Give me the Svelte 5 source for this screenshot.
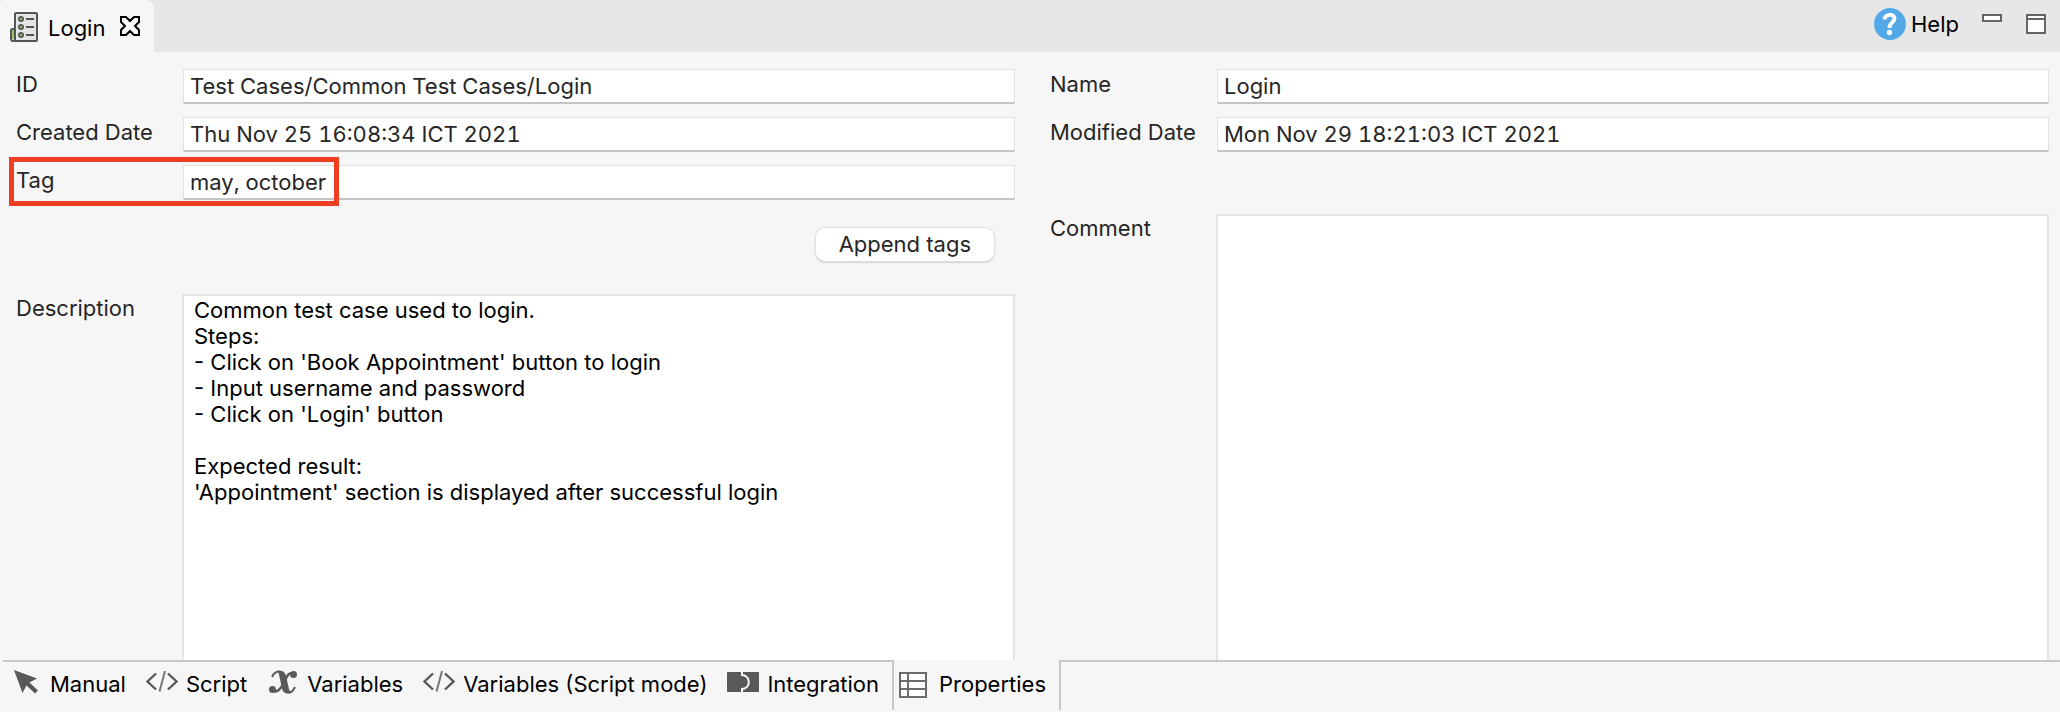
<script>
  let id = $state('Test Cases/Common Test Cases/Login');
  let created = $state('Thu Nov 25 16:08:34 ICT 2021');
  let tag = $state('may, october');
  let name = $state('Login');
  let modified = $state('Mon Nov 29 18:21:03 ICT 2021');
  let comment = $state('');
  let description = $state(
    [
      'Common test case used to login.',
      'Steps:',
      "- Click on 'Book Appointment' button to login",
      '- Input username and password',
      "- Click on 'Login' button",
      '',
      'Expected result:',
      "'Appointment' section is displayed after successful login"
    ].join('\n')
  );

  const tabs = [
    { icon: 'pointer', label: 'Manual' },
    { icon: 'code', label: 'Script' },
    { icon: 'variable', label: 'Variables' },
    { icon: 'code', label: 'Variables (Script mode)' },
    { icon: 'integration', label: 'Integration' },
    { icon: 'table', label: 'Properties' }
  ];
  let selected = $state('Properties');
</script>

<div class="editor">
  <header>
    <div class="file-tab">
      <svg class="case-icon" width="28" height="30" viewBox="0 0 28 30" aria-hidden="true">
        <path d="M5 17H2.500Q1 17 1 18.500V26.500Q1 29 3.500 29H6" fill="#fff" stroke="#555" stroke-width="2" />
        <path d="M3.500 18V27" stroke="#7fc241" stroke-width="2.500" />
        <rect x="5" y="1" width="22" height="28" rx="1" fill="#e4e4e4" stroke="#555" stroke-width="2" />
        <g fill="#7fae55" stroke="#555" stroke-width="1.600">
          <circle cx="11" cy="7" r="2.200" /><circle cx="11" cy="15" r="2.200" /><circle cx="11" cy="23" r="2.200" />
        </g>
        <path d="M16 7h8M16 15h8M16 23h8" stroke="#555" stroke-width="2" />
      </svg>
      <span>Login</span>
      <button class="plain" aria-label="Close">
        <svg width="20" height="20" viewBox="0 0 20 20" aria-hidden="true">
          <path d="M1 1H6L10 5L14 1H19V6L15 10L19 14V19H14L10 15L6 19H1V14L5 10L1 6Z" fill="#fff" stroke="#000" stroke-width="2" />
        </svg>
      </button>
    </div>
    <div class="tools">
      <button class="plain help">
        <svg width="32" height="32" viewBox="0 0 32 32" aria-hidden="true">
          <circle cx="16" cy="16" r="16" fill="#53a8e8" />
          <path d="M10.500 11.500C11 5.500 20.500 5.500 20.500 10.500C20.500 14.500 15.500 14.500 15.500 20" fill="none" stroke="#fff" stroke-width="4" />
          <circle cx="15.500" cy="24.500" r="2.700" fill="#fff" />
        </svg>
        <span>Help</span>
      </button>
      <button class="plain minimize" aria-label="Minimize">
        <svg width="20" height="8" viewBox="0 0 20 8" aria-hidden="true">
          <rect x="1" y="1" width="18" height="6" fill="#fff" stroke="#666" stroke-width="2" />
        </svg>
      </button>
      <button class="plain" aria-label="Maximize">
        <svg width="20" height="20" viewBox="0 0 20 20" aria-hidden="true">
          <rect x="1" y="1" width="18" height="18" fill="#fff" stroke="#666" stroke-width="2" />
          <path d="M1 5H19" stroke="#666" stroke-width="2" />
        </svg>
      </button>
    </div>
  </header>

  <main>
    <div class="column">
      <div class="row"><label for="id">ID</label><input id="id" bind:value={id} /></div>
      <div class="row"><label for="created">Created Date</label><input id="created" bind:value={created} /></div>
      <div class="row">
        <label for="tag">Tag</label><input id="tag" bind:value={tag} />
        <div class="highlight"></div>
      </div>
      <div class="actions"><button class="append">Append tags</button></div>
      <div class="row grow">
        <label for="description">Description</label>
        <textarea id="description" spellcheck="false" bind:value={description}></textarea>
      </div>
    </div>
    <div class="column">
      <div class="row"><label for="name">Name</label><input id="name" bind:value={name} /></div>
      <div class="row"><label for="modified">Modified Date</label><input id="modified" bind:value={modified} /></div>
      <div class="row grow comment">
        <label for="comment">Comment</label>
        <textarea id="comment" bind:value={comment}></textarea>
      </div>
    </div>
  </main>

  <nav>
    {#each tabs as tab}
      <button class="tab" class:selected={selected === tab.label} onclick={() => (selected = tab.label)}>
        <svg width="32" height="32" viewBox="0 0 32 32" fill="none" aria-hidden="true">
          {#if tab.icon === 'pointer'}
            <path d="M4 2L27 10.500L19.500 14.500L28 22.500L25 25.500L16.500 17.500L12.500 25Z" fill="#595959" />
          {:else if tab.icon === 'code'}
            <path d="M10 5.500L1.500 13.500L10 21.500M22 5.500L30.500 13.500L22 21.500" stroke="#595959" stroke-width="2.400" />
            <path d="M19 3L13.500 23.500" stroke="#777" stroke-width="2" />
          {:else if tab.icon === 'variable'}
            <path d="M5 9C7 4.500 9.500 3.500 12 3.500C15.500 3.500 16.500 6 17 9L19 19C19.500 22.500 20.500 24.500 22.500 24.500C25 24.500 26.500 22 28 19" stroke="#595959" stroke-width="2" />
            <path d="M10 3C15 2 18 3.500 19 8L21.500 19C22 22 23 24 25 24.500C20 27 16 25 15 20.500L12.500 9C12 6 11.500 4 10 3Z" fill="#595959" />
            <path d="M26 6C21 3 19 11 16.500 15.500C13.500 21 10 26 5 22" stroke="#595959" stroke-width="2.500" />
            <circle cx="26.500" cy="6.500" r="3.500" fill="#595959" />
            <circle cx="5.500" cy="21.500" r="3.500" fill="#595959" />
          {:else if tab.icon === 'integration'}
            <rect y="4" width="32" height="20" rx="1" fill="#595959" />
            <path d="M15 3V7C24 7.500 24 20.500 15 21V25" stroke="#fff" stroke-width="2" />
          {:else}
            <rect x="1" y="5" width="26" height="24" fill="#fff" stroke="#6b6b6b" stroke-width="2" />
            <path d="M1 13H27M1 21H27M9 5V29" stroke="#6b6b6b" stroke-width="2" />
          {/if}
        </svg>
        <span>{tab.label}</span>
      </button>
    {/each}
    <div class="rest"></div>
  </nav>
</div>

<style>
  :global(body) {
    margin: 0;
    background: #f6f6f6;
  }
  .editor {
    display: flex;
    flex-direction: column;
    height: 100vh;
    background: #f6f6f6;
    color: #000;
    font: 22px/26px Inter, sans-serif;
  }
  button,
  input,
  textarea {
    box-sizing: border-box;
    margin: 0;
    font: inherit;
    color: inherit;
    border-radius: 0;
    outline: none;
  }
  svg {
    display: block;
    flex: none;
  }
  header {
    display: flex;
    justify-content: space-between;
    height: 52px;
    background: #e7e7e7;
  }
  .file-tab {
    display: flex;
    align-items: center;
    gap: 10px;
    padding: 2px 14px 0 10px;
    border-radius: 4px 8px 0 0;
    background: #f6f6f6;
  }
  .file-tab span {
    padding-top: 2px;
  }
  .plain {
    display: flex;
    padding: 0;
    border: 0;
    background: none;
  }
  .file-tab .plain {
    padding: 0 0 2px 5px;
  }
  .tools {
    display: flex;
    align-items: flex-start;
    padding: 8px 14px 0 0;
  }
  .tools .plain {
    padding-top: 6px;
  }
  .tools .help {
    align-items: center;
    gap: 5px;
    margin-right: 23px;
    padding-top: 0;
  }
  .minimize {
    margin-right: 24px;
  }
  main {
    display: grid;
    grid-template-columns: 1fr 1fr;
    gap: 35px;
    flex: 1;
    min-height: 0;
    padding: 17px 11px 0 16px;
    color: #262626;
  }
  .column {
    display: flex;
    flex-direction: column;
    gap: 13px;
    min-width: 0;
  }
  .row {
    position: relative;
    display: grid;
    grid-template-columns: 167px 1fr;
  }
  .row label {
    padding-top: 2px;
  }
  .grow {
    flex: 1;
    grid-template-columns: 166px 1fr;
    min-height: 0;
  }
  .grow label {
    padding-top: 1px;
  }
  input {
    width: 100%;
    height: 35px;
    padding: 0 6px 1px;
    border: 1px solid #e2e2e2;
    border-bottom: 2px solid #c4c4c4;
    background: #fff;
    font-variant-numeric: tabular-nums;
  }
  textarea {
    width: 100%;
    height: 100%;
    padding: 1px 10px;
    border: 2px solid #e5e5e5;
    border-bottom: 0;
    background: #fff;
    color: #000;
    resize: none;
  }
  .comment {
    margin-top: 49px;
  }
  .highlight {
    position: absolute;
    top: -8px;
    left: -7px;
    box-sizing: border-box;
    width: 330px;
    height: 49px;
    border: 5px solid #ee3f24;
    pointer-events: none;
  }
  .actions {
    display: flex;
    justify-content: flex-end;
    padding: 15px 21px 20px 0;
  }
  .append {
    height: 33px;
    padding: 0 23px 1px;
    border: 0;
    border-radius: 9px;
    background: #fff;
    box-shadow: 0 0 1px 1px #e0e0e0, 0 1px 2px #999;
  }
  nav {
    display: flex;
    height: 52px;
    padding-left: 3px;
  }
  .tab {
    display: flex;
    align-items: flex-start;
    gap: 8px;
    padding: 6px 13px 0 7px;
    border: 0;
    border-top: 2px solid #c8c8c8;
    background: none;
    white-space: nowrap;
  }
  .tab span {
    padding-top: 3px;
  }
  .tab.selected {
    height: 50px;
    padding: 8px 13px 0 5px;
    border: 2px solid #c8c8c8;
    border-width: 0 2px;
  }
  .rest {
    flex: 1;
    border-top: 2px solid #c8c8c8;
  }
</style>
